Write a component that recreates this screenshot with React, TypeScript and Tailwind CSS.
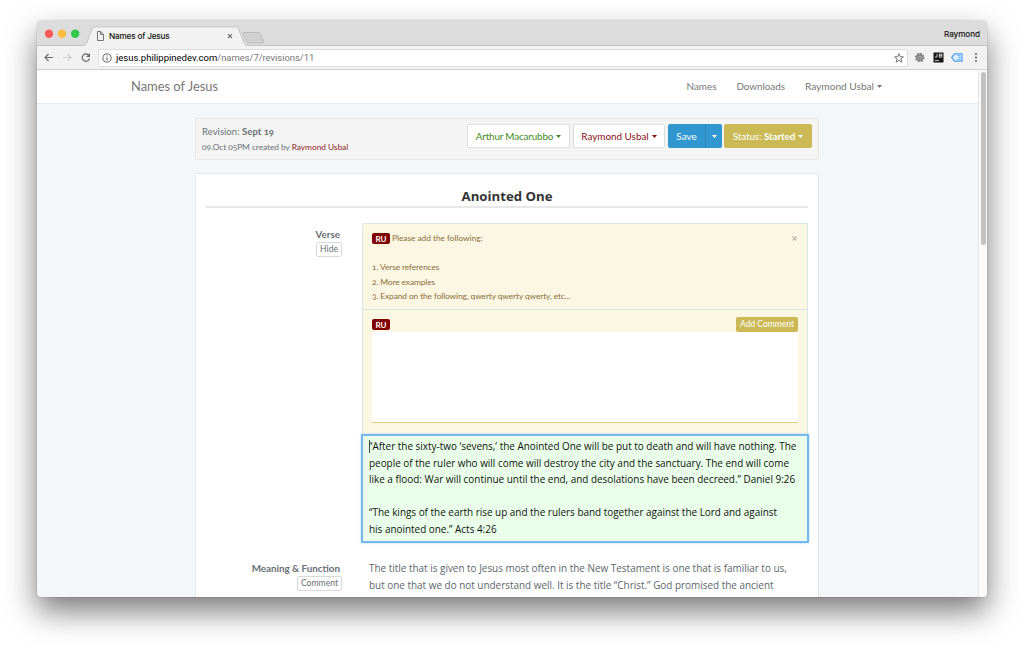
import React from "react";

function Caret({ className = "" }: { className?: string }) {
  return (
    <svg viewBox="0 0 5 3" className={"inline-block h-[3px] w-[5px] shrink-0 " + className} fill="currentColor">
      <path d="M0 0h5L2.5 3z" />
    </svg>
  );
}

function Initials() {
  return (
    <span className="flex h-[11px] w-[18px] shrink-0 items-center justify-center rounded-[2px] bg-[#800000] text-[8px] font-bold leading-none text-white">
      RU
    </span>
  );
}

function TabStrip() {
  return (
    <div className="relative flex h-[25px] shrink-0 items-center bg-[#dcdcdc]">
      <svg className="absolute left-0 top-0 h-[25px] w-[950px]" viewBox="0 0 950 25" fill="none">
        <path d="M0 24.5H47C49 24 49.500 23 50 21.500L55 8C55.500 6.500 56.500 6 58 6H198C200 6 201 6.500 201.500 8L207 22C207.500 23.500 208 24.500 210 24.500H950" stroke="#c4c4c4" />
        <path d="M47 25C49 24.500 50 23 50.500 21.500L55.500 8.500C56 7 57 6.500 58.500 6.500H198C200 6.500 200.500 7 201 8.500L206.500 22C207 23.500 208 25 210 25Z" fill="#f2f2f2" />
        <path d="M207 11.500H221C222.500 11.500 223 12 223.500 13L226.500 20C227 21.500 226.500 22 225 22H212C210.500 22 210 21.500 209.500 20.500L206 13C205.500 12 206 11.500 207 11.500Z" fill="#d0d0d0" stroke="#bcbcbc" />
        <circle cx="12" cy="12.700" r="4.200" fill="#fc5b57" />
        <circle cx="25" cy="12.700" r="4.200" fill="#fdbc40" />
        <circle cx="38.200" cy="12.700" r="4.200" fill="#34c84a" />
        <path d="M60.500 10.500h3.200l2.800 2.800v6.200h-6zM63.500 10.500v3h3" stroke="#777" />
        <path d="M191 13.200l4 4m0-4l-4 4" stroke="#666" strokeWidth="1.100" />
      </svg>
      <span className="relative ml-[72px] mt-[5px] w-[100px] whitespace-nowrap font-['Inter','Liberation_Sans',sans-serif] text-[8.200px] font-medium leading-3 tracking-[-0.180px] text-[#111]">Names of Jesus</span>
      <span className="relative ml-auto mr-[7px] mt-px font-['Inter','Liberation_Sans',sans-serif] text-[8.200px] font-medium leading-3 tracking-[-0.100px] text-[#111]">Raymond</span>
    </div>
  );
}

function Toolbar() {
  return (
    <div className="flex h-6 shrink-0 items-center border-b border-[#cfcfcf] bg-[#f2f2f2]">
      <svg className="h-[23px] w-[61px] shrink-0" viewBox="0 0 61 23" fill="none">
        <path d="M16 11.500H8M11.500 8L8 11.500L11.500 15" stroke="#6a6a6a" strokeWidth="1.100" />
        <path d="M26 11.500h8M30.500 8L34 11.500L30.500 15" stroke="#d0d0d0" strokeWidth="1.100" />
        <path d="M52 9.500A3.700 3.700 0 1 0 52.500 12.500" stroke="#6a6a6a" strokeWidth="1.200" />
        <path d="M53 7v4h-4z" fill="#6a6a6a" />
      </svg>
      <div className="flex h-[18px] w-[810px] shrink-0 items-center rounded-[2px] border border-[#dedede] bg-white">
        <svg className="ml-[3px] h-[10px] w-[10px] shrink-0" viewBox="0 0 10 10" fill="none" stroke="#666">
          <circle cx="5" cy="5" r="4.100" />
          <path d="M5 4.400V7.500M5 2.400v1.100" strokeWidth="1.100" />
        </svg>
        <span className="ml-[4px] whitespace-nowrap font-['Roboto','Liberation_Sans',sans-serif] text-[9.500px] leading-3 text-[#777]">
          <span className="text-black">jesus.philippinedev.com</span><span className="-tracking-[0.060px]">/names/7/revisions/11</span>
        </span>
        <svg className="ml-auto mr-[3px] h-[10px] w-[10px]" viewBox="0 0 10 10" fill="none" stroke="#666" strokeWidth=".9">
          <path d="M5 .7L6.200 3.700 9.400 3.900 6.900 5.900 7.800 9.100 5 7.300 2.200 9.100 3.100 5.900.6 3.900 3.800 3.700z" />
        </svg>
      </div>
      <svg className="h-[23px] w-[79px] shrink-0" viewBox="1 0 79 23" fill="none">
        <circle cx="12.700" cy="11.500" r="3.700" fill="#808080" />
        <circle cx="12.700" cy="11.500" r="4.200" stroke="#808080" strokeWidth="1.300" strokeDasharray="1.800 1.500" />
        <path d="M11.300 12.800a1.700 1.700 0 0 1 2.800-2M14.200 10.500a1.700 1.700 0 0 1-2.500 2.300" stroke="#cfcfcf" strokeWidth=".7" />
        <path d="M26.500 6.500h10v10h-10z" fill="#161616" />
        <path d="M28 14.500h4M30 8v3h-2M32.300 8v3.200h2.500V8zM32.300 9.600h2.500" stroke="#eee" strokeWidth=".8" />
        <path d="M47.500 7.800h7.500v7.400h-7.500l-2.800-3.700z" fill="#dcecff" stroke="#4b9bf5" strokeWidth="1.200" />
        <path d="M50.500 9.500h2.500v4h-2.500M51 11.500h2" stroke="#6aabf7" strokeWidth=".8" />
        <circle cx="69" cy="8" r=".95" fill="#555" />
        <circle cx="69" cy="11.500" r=".95" fill="#555" />
        <circle cx="69" cy="15" r=".95" fill="#555" />
      </svg>
    </div>
  );
}

function SiteNav() {
  return (
    <nav className="flex h-[34px] shrink-0 items-center whitespace-nowrap border-b border-[#dfe8ef] bg-white pl-[94px] pr-[96px] text-[10.200px] text-[#777]">
      <span className="pt-px text-[12.900px]">Names of Jesus</span>
      <span className="ml-auto text-[9.900px]">Names</span>
      <span className="ml-5 text-[9.900px] tracking-[-0.050px]">Downloads</span>
      <span className="ml-5 tracking-[-0.030px]">Raymond Usbal</span>
      <Caret className="ml-[3px]" />
    </nav>
  );
}

function RevisionBar() {
  return (
    <section className="flex h-[42px] shrink-0 items-start justify-between whitespace-nowrap rounded-[2px] border border-[#e6e8e8] bg-[#f4f4f4] pl-[6px] pr-[6px] text-[#697175]">
      <div className="pt-[5px] oldstyle-nums">
        <div className="text-[9.600px] leading-[15px]">Revision: <b>Sept 19</b></div>
        <div className="text-[8.400px] leading-[16px] tracking-[-0.060px]">09.Oct 05PM created by <span className="text-[#8f1d25]">Raymond Usbal</span></div>
      </div>
      <div className="mt-[5px] flex h-6 text-[9.900px]">
        <button className="flex w-[103px] items-center justify-center rounded-[2px] border border-[#dedede] bg-white pt-px tracking-[-0.150px] text-[#3f8a22]">Arthur Macarubbo<Caret className="ml-[3px]" /></button>
        <button className="ml-[3px] flex w-[92px] items-center justify-center rounded-[2px] border border-[#dedede] bg-white pt-px text-[#8b1019]">Raymond Usbal<Caret className="ml-[3px]" /></button>
        <button className="ml-[3px] flex w-[37px] items-center justify-center rounded-l-[2px] bg-[#3097d1] pt-px text-white">Save</button>
        <button className="flex w-[17px] items-center justify-center rounded-r-[2px] border-l border-[#2a88bd] bg-[#3097d1] pt-px text-white"><Caret /></button>
        <button className="ml-[2px] flex w-[88px] items-center justify-center rounded-[2px] bg-[#cbb956] pt-px text-[9.700px] text-white"><span>Status: <b>Started</b></span><Caret className="ml-[3px]" /></button>
      </div>
    </section>
  );
}

function CommentBox() {
  return (
    <div className="h-[211px] rounded-t-[2px] border border-b-0 border-[#dce6e6] bg-[#fcf7e3] text-[#8a6d3b]">
      <div className="h-[86px] border-b border-[#dce4e3] pl-[9px] pr-[10px] pt-[9px] text-[8.400px] leading-[14.500px] tracking-[-0.110px]">
        <div className="flex h-[11px] items-center">
          <Initials />
          <span className="ml-[2px] tracking-[-0.040px]">Please add the following:</span>
          <svg className="ml-auto h-[5px] w-[5px]" viewBox="0 0 5 5" stroke="#c4c0b0" strokeWidth="1.500"><path d="M.5.5l4 4m0-4l-4 4" /></svg>
        </div>
        <ol className="mt-4 oldstyle-nums">
          <li>1. Verse references</li>
          <li>2. More examples</li>
          <li>3. Expand on the following, qwerty qwerty qwerty, etc...</li>
        </ol>
      </div>
      <div className="px-[9px] pt-[7px]">
        <div className="flex h-[15px] items-center justify-between">
          <Initials />
          <button className="flex h-[15px] w-[62px] items-center justify-center whitespace-nowrap rounded-[2px] bg-[#cbb956] text-[8.500px] text-white">Add Comment</button>
        </div>
        <div className="h-[91px] border-b border-[#e0cd83] bg-white" />
      </div>
    </div>
  );
}

function Label({ text, action, className }: { text: string; action: string; className: string }) {
  return (
    <div className={"flex w-[136px] shrink-0 flex-col items-end whitespace-nowrap " + className}>
      <span className="mr-[2px] text-[9.800px] font-bold leading-[15px] text-[#697175]">{text}</span>
      <button className="flex h-[15px] items-center rounded-[2px] border border-[#d9d9d9] px-[3px] text-[8.600px] leading-none text-[#697175]">{action}</button>
    </div>
  );
}

function Editor() {
  return (
    <article className="mt-[13px] h-[430px] shrink-0 rounded-t-[2px] border border-b-0 border-[#dfe8ef] bg-white px-[10px]">
      <h1 className="h-[34px] border-b-2 border-[#e8e8e8] pt-[13px] text-center font-['Open_Sans',sans-serif] text-[13.200px] font-bold leading-[18px] text-[#333]">Anointed One</h1>
      <div className="mt-[15px] flex">
        <Label text="Verse" action="Hide" className="pt-[4px]" />
        <div className="ml-5 w-[446px] shrink-0">
          <CommentBox />
          <div className="-ml-px h-[109px] w-[448px] whitespace-nowrap rounded-[1px] border-2 border-[#74b8ef] bg-[#eaffea] pl-[6px] pt-[2px] font-['Open_Sans',sans-serif] text-[9.930px] leading-[16.500px] text-[#111] shadow-[0_0_2px_#8cc4f4]">
            <p className="relative">
              <span className="absolute left-0 top-[2px] h-[13px] w-px bg-[#444]" />
              “After the sixty-two ‘sevens,’ the Anointed One will be put to death and will have nothing. The<br />
              people of the ruler who will come will destroy the city and the sanctuary. The end will come<br />
              like a flood: War will continue until the end, and desolations have been decreed.” Daniel 9:26
            </p>
            <p className="mt-[16.500px]">
              “The kings of the earth rise up and the rulers band together against the Lord and against<br />
              his anointed one.” Acts 4:26
            </p>
          </div>
        </div>
      </div>
      <div className="mt-[17px] flex">
        <Label text="Meaning & Function" action="Comment" className="pt-px" />
        <p className="ml-[27px] whitespace-nowrap font-['Open_Sans',sans-serif] text-[9.930px] leading-[16.500px] text-[#5d666b]">
          The title that is given to Jesus most often in the New Testament is one that is familiar to us,<br />
          but one that we do not understand well. It is the title “Christ.” God promised the ancient
        </p>
      </div>
    </article>
  );
}

export default function App() {
  return (
    <div className="h-[650px] w-[1024px] overflow-hidden bg-white px-[37px] pt-[21px]">
      <div className="flex h-[576px] w-[950px] flex-col overflow-hidden rounded-[4px] bg-[#f3f7fa] font-['Lato',sans-serif] shadow-[0_14px_31px_rgba(0,0,0,0.53),0_0_2px_rgba(0,0,0,0.25)]">
        <TabStrip />
        <Toolbar />
        <div className="flex min-h-0 flex-1">
          <div className="flex w-[941px] flex-col overflow-hidden">
            <SiteNav />
            <main className="ml-[158px] mt-[14px] flex w-[624px] flex-col">
              <RevisionBar />
              <Editor />
            </main>
          </div>
          <div className="w-[9px] border-l border-[#e5e5e5] bg-[#fafafa] pl-[2px] pt-[2px]">
            <div className="h-[173px] w-[5px] rounded-full bg-[#c1c1c1]" />
          </div>
        </div>
      </div>
    </div>
  );
}
